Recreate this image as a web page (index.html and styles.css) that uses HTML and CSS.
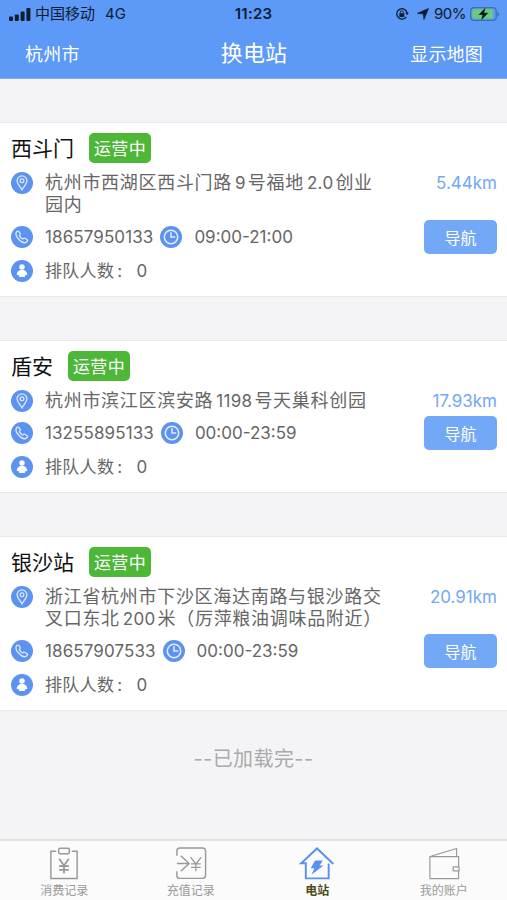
FILE: index.html
```html
<!DOCTYPE html>
<html lang="zh-CN">
<head>
	<meta charset="utf-8">
	<meta name="viewport" content="width=device-width, initial-scale=1">
	<title>换电站</title>
	<link rel="stylesheet" href="styles.css">
</head>
<body>

<!-- shared icons -->
<svg class="defs" width="0" height="0">
	<symbol id="pin" viewBox="0 0 22 22">
		<circle cx="11" cy="11" r="11" fill="#5c93f0"/>
		<path d="M11 17.800C8.500 14 6.100 11.500 6.100 8.800a4.900 4.900 0 0 1 9.800 0c0 2.700-2.400 5.200-4.900 9z" fill="none" stroke="#dfe9fd" stroke-width="1.300"/>
		<circle cx="11" cy="8.700" r="1.900" fill="none" stroke="#dfe9fd" stroke-width="1.200"/>
	</symbol>
	<symbol id="phone" viewBox="0 0 22 22">
		<circle cx="11" cy="11" r="11" fill="#5c93f0"/>
		<path d="M5.300 6.300C6 5.300 6.900 4.600 7.700 5.400l1.500 2c.5.8-.2 1.400-.8 2-.4.500 2.700 3.900 3.400 3.500.7-.6 1.300-1.200 2-.7l2.400 1.500c.9.700.1 1.700-.8 2.400-2.100 1.500-5.200-.3-7.200-2.400-2.100-2.100-4.100-5.200-2.900-7.400z" fill="none" stroke="#dfe9fd" stroke-width="1.300" stroke-linejoin="round"/>
	</symbol>
	<symbol id="clock" viewBox="0 0 22 22">
		<circle cx="11" cy="11" r="11" fill="#5c93f0"/>
		<circle cx="11" cy="11" r="6.700" fill="none" stroke="#e6eefe" stroke-width="1.500"/>
		<path d="M11 6.300V11h4.200" fill="none" stroke="#e6eefe" stroke-width="1.500"/>
	</symbol>
	<symbol id="person" viewBox="0 0 22 22">
		<circle cx="11" cy="11" r="11" fill="#5c93f0"/>
		<circle cx="11" cy="7" r="2.700" fill="#fff"/>
		<path d="M9.200 10h3.600c2 .7 3.300 2.300 3.500 4.800l-2 .7-.4-1.400v3H8.100v-3l-.4 1.400-2-.7c.2-2.500 1.500-4.100 3.500-4.800z" fill="#fff"/>
	</symbol>
</svg>

<div class="app">
	<header class="top">
		<div class="status">
			<div class="status-left">
				<svg width="22" height="13" viewBox="0 0 22 13" fill="#0b1c33">
					<rect x="0" y="8.500" width="4" height="4.500" rx="1"/>
					<rect x="5.800" y="6.500" width="4" height="6.500" rx="1"/>
					<rect x="11.600" y="3.500" width="4" height="9.500" rx="1"/>
					<rect x="17.400" y="0" width="4" height="13" rx="1"/>
				</svg>
				<span class="carrier">中国移动</span>
				<span class="network">4G</span>
			</div>
			<div class="time">11:23</div>
			<div class="status-right">
				<svg width="14" height="14" viewBox="0 0 14 14">
					<path d="M11.300 9.800A5.200 5.200 0 1 1 12 5.600" fill="none" stroke="#0b1c33" stroke-width="1.300"/>
					<path d="M10.200 5.500h3.600L12 8.300z" fill="#0b1c33"/>
					<rect x="4.300" y="6.200" width="5" height="3.800" rx=".5" fill="#0b1c33"/>
					<path d="M5.300 6.500V5.300a1.500 1.500 0 0 1 3 0v1.200" fill="none" stroke="#0b1c33"/>
				</svg>
				<svg class="arrow" width="12" height="12" viewBox="0 0 12 12"><path d="M11.600.4L6.900 11.600 6.300 6 .4 5.300z" fill="#0b1c33" stroke="#0b1c33" stroke-width=".6" stroke-linejoin="round"/></svg>
				<span class="percent">90%</span>
				<svg class="battery" width="30" height="14" viewBox="0 0 30 14">
					<rect x=".7" y=".7" width="25.500" height="12.600" rx="3.300" fill="none" stroke="#416da8" stroke-width="1.200"/>
					<rect x="2.300" y="2.300" width="20.500" height="9.400" rx="2" fill="#6bcb78"/>
					<path d="M27.500 4.700c2 .8 2 3.800 0 4.600z" fill="#416da8"/>
					<path d="M15.700.3L8.300 7.900h4.100L10.900 13.700l7.600-7.900h-4.200z" fill="#0b1420" stroke="#6bcb78" stroke-width=".3"/>
				</svg>
			</div>
		</div>
		<nav class="nav">
			<a class="city">杭州市</a>
			<h1>换电站</h1>
			<a class="map">显示地图</a>
		</nav>
	</header>

	<main class="list">
		<section class="station">
			<div class="head"><h2>西斗门</h2><span class="badge">运营中</span></div>
			<div class="row address">
				<svg class="icon"><use href="#pin"/></svg>
				<p>杭州市西湖区西斗门路<span class="num">9</span>号福地<span class="num">2.0</span>创业<br>园内</p>
				<span class="distance">5.44km</span>
			</div>
			<div class="row contact">
				<svg class="icon"><use href="#phone"/></svg>
				<span class="tel">18657950133</span>
				<svg class="icon clock"><use href="#clock"/></svg>
				<span class="hours">09:00-21:00</span>
				<a class="go">导航</a>
			</div>
			<div class="row queue">
				<svg class="icon"><use href="#person"/></svg>
				<span>排队人数<i>:</i></span><b>0</b>
			</div>
		</section>

		<section class="station">
			<div class="head"><h2>盾安</h2><span class="badge">运营中</span></div>
			<div class="row address">
				<svg class="icon"><use href="#pin"/></svg>
				<p>杭州市滨江区滨安路<span class="num">1198</span>号天巢科创园</p>
				<span class="distance">17.93km</span>
			</div>
			<div class="row contact">
				<svg class="icon"><use href="#phone"/></svg>
				<span class="tel">13255895133</span>
				<svg class="icon clock"><use href="#clock"/></svg>
				<span class="hours">00:00-23:59</span>
				<a class="go">导航</a>
			</div>
			<div class="row queue">
				<svg class="icon"><use href="#person"/></svg>
				<span>排队人数<i>:</i></span><b>0</b>
			</div>
		</section>

		<section class="station">
			<div class="head"><h2>银沙站</h2><span class="badge">运营中</span></div>
			<div class="row address">
				<svg class="icon"><use href="#pin"/></svg>
				<p>浙江省杭州市下沙区海达南路与银沙路交<br>叉口东北<span class="num">200</span>米（厉萍粮油调味品附近）</p>
				<span class="distance">20.91km</span>
			</div>
			<div class="row contact">
				<svg class="icon"><use href="#phone"/></svg>
				<span class="tel">18657907533</span>
				<svg class="icon clock"><use href="#clock"/></svg>
				<span class="hours">00:00-23:59</span>
				<a class="go">导航</a>
			</div>
			<div class="row queue">
				<svg class="icon"><use href="#person"/></svg>
				<span>排队人数<i>:</i></span><b>0</b>
			</div>
		</section>

		<div class="loaded">--已加载完--</div>
	</main>

	<footer class="tabs">
		<a class="tab">
			<svg width="36" height="36" viewBox="0 0 36 36" fill="none" stroke="#999" stroke-width="1.500">
				<path d="M10 5.500H4.500v28h27v-28H26"/>
				<rect x="12.500" y="2.300" width="11" height="5.700" rx="1.500"/>
				<path d="M13 13l5 7 5-7M18 20v8M13 20.800h10M13 24.500h10" stroke-width="1.800"/>
			</svg>
			<span>消费记录</span>
		</a>
		<a class="tab">
			<svg width="36" height="36" viewBox="0 0 36 36" fill="none" stroke="#999" stroke-width="1.500">
				<path d="M3.500 10V5Q3.500 2 6.500 2h23Q33 2 33 5v25q0 3.300-3.500 3.300h-23q-3 0-3-3V26"/>
				<path d="M3.500 18h12.500M7.500 10l8.500 8-8.500 8"/>
				<path d="M17.500 11.500l5.500 7 5.500-7M23 18.500v7.500M18 18.500h10M18 22h10" stroke-width="1.300"/>
			</svg>
			<span>充值记录</span>
		</a>
		<a class="tab active">
			<svg width="36" height="36" viewBox="0 0 36 36" fill="none" stroke="#5892ee" stroke-width="2">
				<path d="M30 18v15.300H6.500V17.800H1.700L18 2.500l16.800 16"/>
				<path d="M16 15h8l-3.300 5h4L12.300 29.500l3-6.500h-3.800z" fill="#5892ee" stroke="none"/>
			</svg>
			<span>电站</span>
		</a>
		<a class="tab">
			<svg width="36" height="36" viewBox="0 0 36 36" fill="none" stroke="#999" stroke-width="1.200">
				<path d="M33 21.500V11H3.500v22.500H33v-8M4.500 10.500L31 2.500V11M33.500 21.500h-6v4h6z"/>
			</svg>
			<span>我的账户</span>
		</a>
	</footer>
</div>

</body>
</html>
```

FILE: styles.css
```css
* {
	box-sizing: border-box;
}
body,h1,h2,p {
	margin: 0;
	font-weight: normal;
}
body {
	font-family: Inter, "Noto Sans CJK SC", sans-serif;
	color: #666;
	background: #f4f4f7;
}
.defs {
	position: absolute;
}
.app {
	display: flex;
	flex-direction: column;
	height: 900px;
	overflow: hidden;
}

/* top bar */
.top {
	height: 79px;
	background: #5d99f6;
	border-bottom: 1px solid #82b0f6;
}
.status {
	display: grid;
	grid-template-columns: 1fr auto 1fr;
	align-items: center;
	height: 28px;
	padding: 0 7px 0 9px;
	font-size: 14px;
	line-height: 20px;
	color: #0b1c33;
}
.status-left,.status-right {
	display: flex;
	align-items: center;
}
.status-right {
	justify-content: flex-end;
}
.carrier {
	margin-left: 4px;
	font-size: 15px;
}
.network {
	margin-left: 10px;
	font-size: 15px;
}
.time {
	font-size: 15px;
	font-weight: 600;
	letter-spacing: .2px;
	position: relative;
	left: -1px;
}
.arrow {
	margin-left: 8px;
}
.percent {
	margin-left: 5px;
	font-size: 15px;
	letter-spacing: -.5px;
}
.battery {
	margin-left: 4px;
}
.nav {
	display: grid;
	grid-template-columns: 1fr auto 1fr;
	align-items: center;
	height: 50px;
	padding: 0 24px 0 25px;
	font-size: 18px;
	letter-spacing: .2px;
	color: #fff;
}
.nav h1 {
	font-size: 22px;
	line-height: 30px;
}
.map {
	text-align: right;
}

/* stations */
.list {
	flex: 1;
	padding-top: 43px;
}
.station {
	margin-bottom: 43px;
	padding: 10px 10px 14px 11px;
	background: #fff;
	border-top: 1px solid #e9e9ec;
	border-bottom: 1px solid #e9e9ec;
}
.head {
	display: flex;
	align-items: center;
	height: 30px;
}
.head h2 {
	padding-top: 2px;
	font-size: 21px;
	line-height: 30px;
	color: #111;
}
.badge {
	width: 62px;
	height: 30px;
	margin-left: 15px;
	padding-top: 1px;
	border-radius: 5px;
	font-size: 17px;
	line-height: 30px;
	letter-spacing: .4px;
	text-align: center;
	color: #fff;
	background: #4db738;
}
.row {
	display: flex;
	align-items: center;
	font-size: 17px;
}
.icon {
	flex: none;
	width: 22px;
	height: 22px;
	margin-right: 12px;
}
.address {
	align-items: flex-start;
	margin: 9px 0 4px;
}
.address p {
	flex: 1;
	font-size: 18px;
	line-height: 22px;
	letter-spacing: .7px;
	white-space: nowrap;
}
.num {
	margin: 0 2px 0 3px;
	font-size: 17px;
	letter-spacing: .3px;
}
.distance {
	line-height: 22px;
	color: #72a8f5;
}
.contact {
	height: 34px;
}
.tel {
	letter-spacing: .1px;
}
.clock {
	margin-left: 7px;
}
.go {
	width: 73px;
	height: 34px;
	margin-left: auto;
	padding-top: 1px;
	border-radius: 5px;
	font-size: 16px;
	line-height: 34px;
	text-align: center;
	color: #fff;
	background: #72a8f5;
}
.queue {
	height: 22px;
	margin-top: 6px;
	line-height: 22px;
}
.queue span {
	letter-spacing: .3px;
}
.queue i {
	margin-left: 3px;
	font-style: normal;
}
.queue b {
	margin-left: 14px;
	font-weight: normal;
}
.loaded {
	margin-top: -9px;
	font-size: 20px;
	line-height: 28px;
	letter-spacing: .4px;
	text-align: center;
	color: #aaa;
}

/* bottom tabs */
.tabs {
	display: flex;
	height: 61px;
	padding: 5px 0 0 1px;
	background: #fbfbfb;
	border-top: 2px solid #e2e2e4;
}
.tab {
	display: flex;
	flex: 1;
	flex-direction: column;
	align-items: center;
	font-size: 12px;
	line-height: 19px;
	color: #999;
}
.active {
	font-weight: bold;
	color: #4d4a1c;
}
```
